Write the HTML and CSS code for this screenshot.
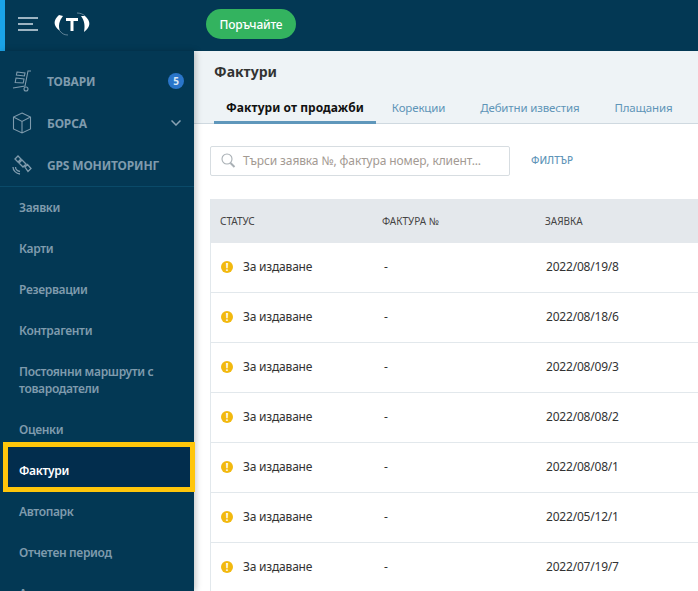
FILE: index.html
```html
<!DOCTYPE html>
<html lang="bg">
<head>
<meta charset="utf-8">
<title>Фактури</title>
<link rel="stylesheet" href="styles.css">
</head>
<body>
<div class="app">
  <header class="topbar">
    <svg class="burger" width="20" height="14" viewBox="0 0 20 14"><path d="M0 1h20M0 7h15M0 13h20" stroke="#9db4c2" stroke-width="2" fill="none"/></svg>
    <svg class="logo" width="38" height="24" viewBox="0 0 38 24"><path d="M6 3C0 8 0 14 7 19C5 14 6 9 10 4Z" fill="#fff"/><path d="M7 19C9 22 12 23 15 23" stroke="#9db4c2" stroke-width=".6" fill="none"/><path d="M32 4C38 9 38 15 31 20C32 15 32 9 28 4Z" fill="#fff"/><path d="M24 1C27 1 30 2 32 4" stroke="#9db4c2" stroke-width=".6" fill="none"/><path d="M13 6h12v3h-4.500v10h-3V9H13Z" fill="#fff"/></svg>
    <button class="order">Поръчайте</button>
  </header>
  <div class="main">
    <nav class="sidebar">
      <div class="primary">
        <div class="pitem">
          <svg class="picon" width="20" height="22" viewBox="0 0 20 22" fill="none" stroke="#7f9bad" stroke-width="1.100"><path d="M19 1h-3l-3 15-12 2"/><path d="M5 2l8 1-.6 3-8-1zM4 8l8 1-.8 4-8-.5z"/><circle cx="14" cy="19" r="2"/></svg>
          <span class="plabel">ТОВАРИ</span><span class="badge">5</span>
        </div>
        <div class="pitem">
          <svg class="picon" width="20" height="22" viewBox="0 0 20 22" fill="none" stroke="#7f9bad" stroke-width="1.100"><path d="M10 1l8.500 4v12L10 21l-8.500-4V5ZM1.500 5L10 9.500 18.500 5M10 9.500V21"/></svg>
          <span class="plabel">БОРСА</span>
          <svg class="chev" width="10" height="6" viewBox="0 0 10 6"><path d="M.5.500L5 5 9.500.5" stroke="#8aa3b4" stroke-width="1.500" fill="none"/></svg>
        </div>
        <div class="pitem">
          <svg class="picon" width="20" height="22" viewBox="0 0 20 22" fill="none" stroke="#7f9bad" stroke-width="1.300"><path d="M3 5l3-3 3 3-3 3zM7 9l3-3 4 4-3 3zM13 13l2.500-2.500 3.500 4-3 3z"/><path d="M1 13c0 3.500 3 6.500 7 7M3.500 13c0 2 2 4 4.500 4.500"/></svg>
          <span class="plabel">GPS МОНИТОРИНГ</span>
        </div>
      </div>
      <div class="sublist">
        <div class="sub">Заявки</div>
        <div class="sub">Карти</div>
        <div class="sub">Резервации</div>
        <div class="sub">Контрагенти</div>
        <div class="sub sub-two">Постоянни маршрути с товародатели</div>
        <div class="sub">Оценки</div>
        <div class="sub active">Фактури<span class="highlight"></span></div>
        <div class="sub">Автопарк</div>
        <div class="sub">Отчетен период</div>
        <div class="sub">Архив</div>
      </div>
    </nav>
    <section class="content">
      <div class="pagehead">
        <h1 class="title">Фактури</h1>
        <div class="tabs">
          <span class="tab tab-active">Фактури от продажби</span>
          <span class="tab">Корекции</span>
          <span class="tab">Дебитни известия</span>
          <span class="tab">Плащания</span>
        </div>
      </div>
      <div class="tools">
        <div class="search">
          <svg width="17" height="17" viewBox="0 0 17 17" fill="none"><circle cx="7" cy="7" r="5" stroke="#a9b0b5" stroke-width="1.100"/><path d="M10.500 11l4 4" stroke="#a9b0b5" stroke-width="2"/></svg>
          <span class="placeholder">Търси заявка №, фактура номер, клиент...</span>
        </div>
        <span class="filter">ФИЛТЪР</span>
      </div>
      <div class="table">
        <div class="row thead"><span>СТАТУС</span><span>ФАКТУРА №</span><span>ЗАЯВКА</span></div>
        <div class="row"><span class="status"><i class="warn">!</i>За издаване</span><span class="dash">-</span><span class="num">2022/08/19/8</span></div>
        <div class="row"><span class="status"><i class="warn">!</i>За издаване</span><span class="dash">-</span><span class="num">2022/08/18/6</span></div>
        <div class="row"><span class="status"><i class="warn">!</i>За издаване</span><span class="dash">-</span><span class="num">2022/08/09/3</span></div>
        <div class="row"><span class="status"><i class="warn">!</i>За издаване</span><span class="dash">-</span><span class="num">2022/08/08/2</span></div>
        <div class="row"><span class="status"><i class="warn">!</i>За издаване</span><span class="dash">-</span><span class="num">2022/08/08/1</span></div>
        <div class="row"><span class="status"><i class="warn">!</i>За издаване</span><span class="dash">-</span><span class="num">2022/05/12/1</span></div>
        <div class="row"><span class="status"><i class="warn">!</i>За издаване</span><span class="dash">-</span><span class="num">2022/07/19/7</span></div>
      </div>
    </section>
  </div>
</div>
</body>
</html>
```

FILE: styles.css
```css
* { box-sizing: border-box; }
html, body { margin: 0; height: 100%; overflow: hidden; }
body { font-family: "Noto Sans", "Open Sans", sans-serif; font-size: 12px; background: #fff; color: #333; }
.app { display: flex; flex-direction: column; height: 591px; overflow: hidden; }
.topbar { height: 51px; flex: none; background: #033854; border-left: 5px solid #1aa3e8; display: flex; align-items: center; padding: 0 0 3px 13px; }
.burger { flex: none; }
.logo { flex: none; margin-left: 15px; }
.order { margin-left: 115px; height: 30px; width: 90px; border: 0; border-radius: 15px; background: #33b35f; color: #fff; font: 500 12px "Noto Sans", sans-serif; letter-spacing: -.2px; padding: 0; }
.main { flex: 1; display: flex; min-height: 0; }
.sidebar { width: 194px; flex: none; background: #033854; position: relative; z-index: 1; box-shadow: 2px 0 6px rgba(0,0,0,.22); }
.primary { padding-top: 9px; border-bottom: 1px solid #0a4a69; height: 136px; }
.pitem { height: 42px; display: flex; align-items: center; padding-left: 12px; color: #7f9bad; font-weight: 700; font-size: 12px; letter-spacing: -.15px; }
.picon { flex: none; }
.plabel { margin-left: 15px; flex: 1; }
.badge { width: 16px; height: 16px; border-radius: 50%; background: #2a75c9; color: #dbe8f3; font-size: 10px; line-height: 16px; text-align: center; margin-right: 10px; }
.chev { margin-right: 13px; }
.sublist { display: flex; flex-direction: column; }
.sub { height: 41px; flex: none; display: flex; align-items: center; padding: 0 19px; color: #7f9bad; font-weight: 600; font-size: 12px; letter-spacing: -.33px; line-height: 17px; position: relative; }
.sub-two { height: 58px; padding-right: 30px; }
.active { color: #fff; }
.highlight { position: absolute; z-index: -1; left: 3px; top: -8px; width: 192px; height: 50px; background: #022d4d; border: 5px solid #ffc60b; }
.content { flex: 1; min-width: 0; }
.pagehead { height: 73px; background: #eef3f6; border-bottom: 1px solid #cfd9e0; padding: 11px 0 0 20px; }
.title { margin: 0; font-size: 14px; line-height: 20px; font-weight: 700; color: #333; }
.tabs { display: flex; gap: 35px; margin-top: 17px; }
.tab { color: #5f95b8; font-size: 11.500px; letter-spacing: -.15px; height: 24px; line-height: 18px; white-space: nowrap; }
.tab-active { color: #111; font-size: 12px; letter-spacing: .05px; font-weight: 700; padding: 0 12px; border-bottom: 3px solid #5f97bb; height: 25px; margin-right: -19px; }
.tools { display: flex; align-items: center; margin: 22px 0 0 16px; height: 29px; }
.search { width: 300px; height: 30px; border: 1px solid #d7dde1; border-radius: 2px; display: flex; align-items: center; padding-left: 9px; background: #fff; }
.placeholder { margin-left: 6px; color: #a39a93; font-size: 12px; letter-spacing: -.12px; white-space: nowrap; }
.filter { margin: 0 0 1px 21px; color: #5f95b8; font-size: 10px; font-weight: 500; }
.table { margin: 24px 0 0 16px; width: 700px; border-left: 1px solid #e2e8ec; }
.row { display: grid; grid-template-columns: 162px 163px 1fr; height: 50px; align-items: center; border-bottom: 1px solid #e2e8ec; padding: 0 0 2px 10px; font-size: 12px; letter-spacing: -.2px; color: #333; }
.thead { height: 44px; background: #e4e8ec; font-size: 10px; letter-spacing: 0; padding: 0 0 0 9px; border-bottom: 0; color: #444; }
.status { display: flex; align-items: center; }
.warn { width: 12px; height: 12px; border-radius: 50%; background: #f2b90f; color: #fff; font: 700 10px/12px "Noto Sans", sans-serif; text-align: center; margin-right: 10px; flex: none; }
.dash { padding-left: 1px; }
.num { padding-left: 0; }
```
